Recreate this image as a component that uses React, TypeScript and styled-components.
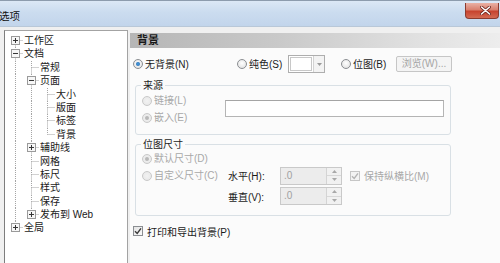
import React from "react";
import styled, { createGlobalStyle } from "styled-components";

const GlobalStyle = createGlobalStyle`
  html, body { margin: 0; padding: 0; }
  body {
    width: 500px; height: 263px; overflow: hidden;
    font-family: "Liberation Sans", "Noto Sans CJK SC", sans-serif;
    font-size: 10px; color: #1b1b1b;
  }
`;

const Window = styled.div`
  width: 500px; height: 263px; background: #f0f0f0;
  display: flex; flex-direction: column; overflow: hidden;
`;

const TitleBar = styled.div`
  height: 27px; flex: none; box-sizing: border-box;
  display: flex; justify-content: space-between; align-items: flex-start;
  border-top: 1px solid #8d9cad;
  border-bottom: 1px solid #b9c8d8;
  background: linear-gradient(180deg, #dce8f5 0%, #cbdcef 45%, #c2d5eb 100%);
`;

const Title = styled.span`
  font-size: 10.5px; line-height: 12px; margin-top: 9px; margin-left: -1px; color: #111;
`;

const CloseButton = styled.div`
  width: 34px; height: 16px; margin-top: 2px; margin-right: 1px;
  box-sizing: border-box; border: 1px solid #8b3b2f; border-top: none;
  border-radius: 0 0 4px 4px;
  background: linear-gradient(180deg, #e9b1a4 0%, #d9806e 45%, #c7432f 55%, #d36a52 100%);
  display: flex; align-items: center; justify-content: center; padding-left: 6px;
`;

const Body = styled.div`
  flex: 1; min-height: 0; display: flex; gap: 2px; padding: 3px 0 0 4px;
`;

const Tree = styled.div`
  width: 124px; flex: none; box-sizing: border-box; background: #fff;
  border: 1px solid #a3a3a3; border-left-color: #7d7d7d; border-bottom: none;
  padding: 3px 0 0 2px;
`;

const TreeRow = styled.div`
  display: flex; height: 13.4px; align-items: stretch;
`;

const TreeLabel = styled.span`
  padding-left: 1px; line-height: 13.4px; white-space: nowrap; font-size: 10px; color: #1a1a1a;
`;

const Panel = styled.div`
  flex: 1; margin-top: 3px; background: #fbfbfb; display: flex; flex-direction: column;
`;

const Header = styled.div`
  height: 15px; flex: none; padding-left: 7px;
  background: linear-gradient(90deg, #b6b6b6 0%, #c9c9c9 40%, #e2e2e2 80%, #ededed 100%);
  font-weight: bold; font-size: 11px; line-height: 15px; color: #1a1a1a;
`;

const Content = styled.div`
  display: flex; flex-direction: column; padding: 7px 0 0 3px;
`;

const TopRow = styled.div`
  display: flex; align-items: center; height: 18px;
`;

const Option = styled.label<{ $w?: number; $disabled?: boolean }>`
  display: inline-flex; align-items: center; gap: 2px; flex: none;
  width: ${(p) => (p.$w ? `${p.$w}px` : "auto")};
  color: ${(p) => (p.$disabled ? "#a8a8a8" : "#1b1b1b")};
  white-space: nowrap; font-size: 10px; line-height: 13px;
`;

const RadioCircle = styled.span<{ $checked?: boolean; $disabled?: boolean }>`
  width: 10px; height: 10px; box-sizing: border-box; border-radius: 50%; flex: none;
  border: 1px solid ${(p) => (p.$disabled ? "#c9c9c9" : "#8b8e92")};
  background: ${(p) =>
    p.$disabled
      ? "radial-gradient(circle at 50% 50%, #f2f2f2, #e6e6e6)"
      : "radial-gradient(circle at 50% 40%, #ffffff, #dcdcdc)"};
  display: flex; align-items: center; justify-content: center;
  &::after {
    content: ""; width: 4px; height: 4px; border-radius: 50%;
    background: ${(p) =>
      !p.$checked ? "transparent" : p.$disabled ? "#b8b8b8" : "radial-gradient(circle, #4aa0e0, #1e5fa8)"};
  }
`;

const ColorCombo = styled.div`
  display: flex; width: 37px; height: 18px; box-sizing: border-box; flex: none;
  border: 1px solid #aeaeae; background: #fff; margin-right: 16px;
`;

const Swatch = styled.div`
  width: 22px; margin: 1px; box-sizing: border-box; border: 1px solid #c8c8c8; background: #fff;
`;

const DropPart = styled.div`
  flex: 1; border-left: 1px solid #d3d3d3; background: #f3f3f3;
  display: flex; align-items: center; justify-content: center;
`;

const BrowseButton = styled.button`
  width: 56px; height: 16px; padding: 0; flex: none;
  border: 1px solid #c6c6c6; border-radius: 2px; background: #f4f4f4;
  color: #a5a5a5; font: inherit; font-size: 10px; line-height: 14px;
`;

const Group = styled.fieldset<{ $mt: number }>`
  margin: ${(p) => p.$mt}px 0 0 2px; width: 316px; box-sizing: border-box; min-width: 0;
  border: 1px solid #d9e0e5; border-radius: 3px;
  padding: 0 6px 8px 6px;
`;

const Legend = styled.legend`
  padding: 0 2px; margin-left: -1px; font-size: 10px; line-height: 13px; color: #1b1b1b;
`;

const SourceBody = styled.div`
  display: flex; align-items: flex-start;
`;

const RadioColumn = styled.div`
  width: 83px; flex: none; display: flex; flex-direction: column;
`;

const RadioRow = styled.div`
  height: 17px; display: flex; align-items: center;
`;

const TextInput = styled.div`
  width: 220px; height: 17px; margin-top: 7.5px; box-sizing: border-box;
  border: 1px solid #b5b5b5; border-top-color: #a5a5a5; background: #fff;
`;

const SizeGrid = styled.div`
  display: grid; grid-template-columns: 86px 52px 62px auto;
  grid-template-rows: 15px 19px 22px; column-gap: 0; align-items: center;
  padding-bottom: 0;
`;

const FieldLabel = styled.span`
  color: #1b1b1b; font-size: 10px; white-space: nowrap;
`;

const SpinBox = styled.div`
  display: flex; width: 62px; height: 18px; box-sizing: border-box;
  border: 1px solid #c9c9c9; background: #ececec;
`;

const SpinValue = styled.span`
  flex: 1; color: #a0a0a0; padding-left: 3px; font-size: 10px; line-height: 15px;
`;

const SpinButtons = styled.div`
  width: 14px; display: flex; flex-direction: column; border-left: 1px solid #d4d4d4;
`;

const SpinHalf = styled.div`
  flex: 1; display: flex; align-items: center; justify-content: center;
  background: #f1f1f1; & + & { border-top: 1px solid #d8d8d8; }
`;

const CheckOption = styled.label<{ $disabled?: boolean; $ml?: number; $mt?: number }>`
  display: inline-flex; align-items: center; gap: 4px; white-space: nowrap;
  margin-left: ${(p) => p.$ml ?? 0}px; margin-top: ${(p) => p.$mt ?? 0}px;
  color: ${(p) => (p.$disabled ? "#a8a8a8" : "#1b1b1b")}; font-size: 10px; height: 14px;
`;

const CheckBox = styled.span<{ $disabled?: boolean }>`
  width: 10px; height: 10px; box-sizing: border-box; flex: none;
  border: 1px solid ${(p) => (p.$disabled ? "#c6c6c6" : "#8b8e92")};
  background: ${(p) => (p.$disabled ? "#f3f3f3" : "linear-gradient(135deg, #e4e4e4, #fafafa)")};
  display: flex; align-items: center; justify-content: center;
`;

type Node = { label: string; level: number; exp?: "+" | "-"; guides: boolean[]; last: boolean; first?: boolean };

const nodes: Node[] = [
  { label: "工作区", level: 0, exp: "+", guides: [], last: false, first: true },
  { label: "文档", level: 0, exp: "-", guides: [], last: false },
  { label: "常规", level: 1, guides: [true], last: false },
  { label: "页面", level: 1, exp: "-", guides: [true], last: false },
  { label: "大小", level: 2, guides: [true, true], last: false },
  { label: "版面", level: 2, guides: [true, true], last: false },
  { label: "标签", level: 2, guides: [true, true], last: false },
  { label: "背景", level: 2, guides: [true, true], last: true },
  { label: "辅助线", level: 1, exp: "+", guides: [true], last: false },
  { label: "网格", level: 1, guides: [true], last: false },
  { label: "标尺", level: 1, guides: [true], last: false },
  { label: "样式", level: 1, guides: [true], last: false },
  { label: "保存", level: 1, guides: [true], last: false },
  { label: "发布到 Web", level: 1, exp: "+", guides: [true], last: true },
  { label: "全局", level: 0, exp: "+", guides: [], last: true },
];

const DOT = "#a3a3a3";

const GuideLine: React.FC<{ on: boolean }> = ({ on }) => (
  <svg width="16" height="13.4" viewBox="0 0 16 13.4" style={{ flex: "none", display: "block" }}>
    {on && <line x1="8.5" y1="0" x2="8.5" y2="13.4" stroke={DOT} strokeDasharray="1 1" />}
  </svg>
);

const NodeGlyph: React.FC<{ n: Node }> = ({ n }) => (
  <svg width="16" height="13.4" viewBox="0 0 16 13.4" style={{ flex: "none", display: "block" }}>
    {!n.first && <line x1="8.5" y1="0" x2="8.5" y2="6.5" stroke={DOT} strokeDasharray="1 1" />}
    {!n.last && <line x1="8.5" y1="6.5" x2="8.5" y2="13.4" stroke={DOT} strokeDasharray="1 1" />}
    <line x1="8.5" y1="6.5" x2="16" y2="6.5" stroke={DOT} strokeDasharray="1 1" />
    {n.exp && (
      <g>
        <rect x="4.5" y="2.5" width="8" height="8" fill="#f7f7f7" stroke="#9a9a9a" />
        <line x1="6" y1="6.5" x2="11" y2="6.5" stroke="#333" />
        {n.exp === "+" && <line x1="8.5" y1="4" x2="8.5" y2="9" stroke="#333" />}
      </g>
    )}
  </svg>
);

const Radio: React.FC<{ checked?: boolean; disabled?: boolean; label: string; w?: number }> = ({
  checked,
  disabled,
  label,
  w,
}) => (
  <Option $w={w} $disabled={disabled}>
    <RadioCircle $checked={checked} $disabled={disabled} />
    <span>{label}</span>
  </Option>
);

const Check: React.FC<{ disabled?: boolean }> = ({ disabled }) => (
  <CheckBox $disabled={disabled}>
    <svg width="8" height="8" viewBox="0 0 8 8">
      <path d="M1 4.2 L3.2 6.4 L7 1.4" fill="none" stroke={disabled ? "#b4b4b4" : "#3a3a3a"} strokeWidth="1.4" />
    </svg>
  </CheckBox>
);

const Spin: React.FC = () => (
  <SpinBox>
    <SpinValue>.0</SpinValue>
    <SpinButtons>
      <SpinHalf>
        <svg width="5" height="3" viewBox="0 0 5 3">
          <path d="M0 3 L2.5 0 L5 3 Z" fill="#a8a8a8" />
        </svg>
      </SpinHalf>
      <SpinHalf>
        <svg width="5" height="3" viewBox="0 0 5 3">
          <path d="M0 0 L2.5 3 L5 0 Z" fill="#a8a8a8" />
        </svg>
      </SpinHalf>
    </SpinButtons>
  </SpinBox>
);

export default function App() {
  return (
    <>
      <GlobalStyle />
      <Window>
        <TitleBar>
          <Title>选项</Title>
          <CloseButton>
            <svg width="11" height="9" viewBox="0 0 11 9">
              <path d="M1.5 1 L9.5 8 M9.5 1 L1.5 8" stroke="#6b231a" strokeWidth="3" strokeLinecap="round" />
              <path d="M1.5 1 L9.5 8 M9.5 1 L1.5 8" stroke="#ffffff" strokeWidth="1.6" strokeLinecap="round" />
            </svg>
          </CloseButton>
        </TitleBar>
        <Body>
          <Tree>
            {nodes.map((n) => (
              <TreeRow key={n.label}>
                {n.guides.map((g, i) => (
                  <GuideLine key={i} on={g} />
                ))}
                <NodeGlyph n={n} />
                <TreeLabel>{n.label}</TreeLabel>
              </TreeRow>
            ))}
          </Tree>
          <Panel>
            <Header>背景</Header>
            <Content>
              <TopRow>
                <Radio checked label="无背景(N)" w={104} />
                <Radio label="纯色(S)" w={51} />
                <ColorCombo>
                  <Swatch />
                  <DropPart>
                    <svg width="5" height="3" viewBox="0 0 5 3">
                      <path d="M0 0 L2.5 3 L5 0 Z" fill="#9a9a9a" />
                    </svg>
                  </DropPart>
                </ColorCombo>
                <Radio label="位图(B)" w={55} />
                <BrowseButton disabled>浏览(W)...</BrowseButton>
              </TopRow>

              <Group $mt={6}>
                <Legend>来源</Legend>
                <SourceBody>
                  <RadioColumn>
                    <RadioRow>
                      <Radio disabled label="链接(L)" />
                    </RadioRow>
                    <RadioRow>
                      <Radio disabled checked label="嵌入(E)" />
                    </RadioRow>
                  </RadioColumn>
                  <TextInput />
                </SourceBody>
              </Group>

              <Group $mt={3}>
                <Legend>位图尺寸</Legend>
                <SizeGrid>
                  <Radio disabled checked label="默认尺寸(D)" />
                  <span />
                  <span />
                  <span />
                  <Radio disabled label="自定义尺寸(C)" />
                  <FieldLabel>水平(H):</FieldLabel>
                  <Spin />
                  <CheckOption $disabled $ml={8}>
                    <Check disabled />
                    <span>保持纵横比(M)</span>
                  </CheckOption>
                  <span />
                  <FieldLabel>垂直(V):</FieldLabel>
                  <Spin />
                  <span />
                </SizeGrid>
              </Group>

              <CheckOption $mt={8}>
                <Check />
                <span>打印和导出背景(P)</span>
              </CheckOption>
            </Content>
          </Panel>
        </Body>
      </Window>
    </>
  );
}
